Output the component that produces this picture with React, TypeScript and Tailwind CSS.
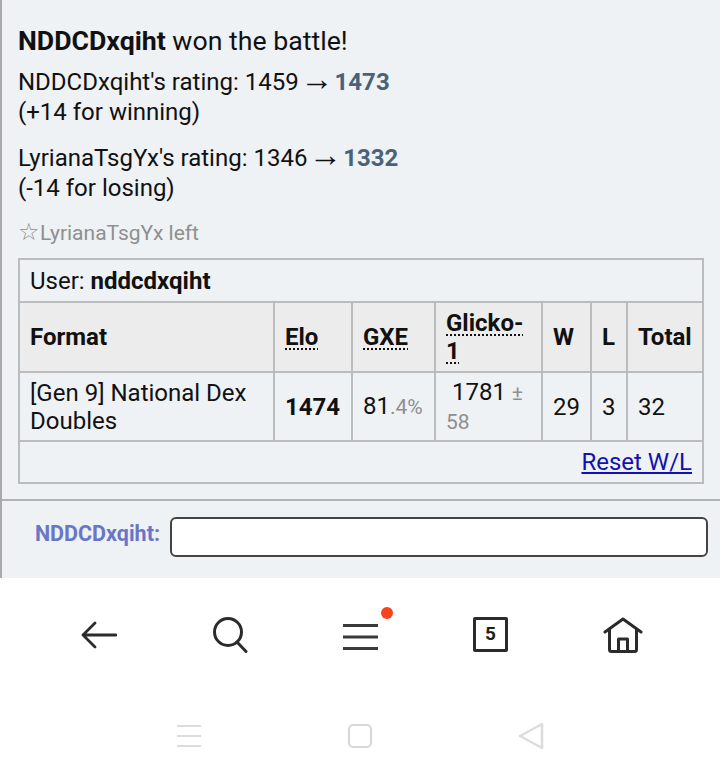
const Abbr = ({ children }: { children: React.ReactNode }) => (
  <span className="underline decoration-dotted decoration-[1.5px] underline-offset-[3px]">{children}</span>
);

const Arrow = () => (
  <span className="font-['Liberation_Sans',sans-serif] text-[33px] leading-[0] mx-[-4.500px]">→</span>
);

const cell = "border-2 border-[#bbbcbd] px-[10px] py-0";

const NavIcons = () => (
  <div className="flex-1 flex flex-col">
    <div className="h-[113px] flex justify-between pl-[80px] pr-[77px] items-center">
      <svg width="37" height="28" viewBox="0 0 37 28" fill="none" stroke="#2b2b2b" strokeWidth="2.800">
        <path d="M36 14H3M15 2 3 14 15 26" strokeLinecap="round" strokeLinejoin="round" />
      </svg>
      <svg width="36" height="37" viewBox="0 0 36 37" fill="none" stroke="#2b2b2b" strokeWidth="3">
        <circle cx="16" cy="16" r="13.500" />
        <path d="M25 26 34 35.500" strokeLinecap="round" />
      </svg>
      <div className="relative mt-[4px]">
        <svg width="35" height="26" viewBox="0 0 35 26" fill="none" stroke="#3a3a3a" strokeWidth="3">
          <path d="M0 1.500H35M0 13H35M0 24.500H35" />
        </svg>
        <span className="absolute right-[-15px] top-[-17px] size-3 rounded-full bg-[#f5451f]" />
      </div>
      <div className="size-[35px] border-[3px] border-[#2b2b2b] rounded-[2px] flex items-center justify-center font-['Roboto',sans-serif] font-bold text-[19px] text-[#1e1e1e]">
        5
      </div>
      <svg width="40" height="36" viewBox="0 0 40 36" fill="none" stroke="#2b2b2b" strokeWidth="3" strokeLinejoin="round" strokeLinecap="round">
        <path d="M2 15 20 2l18 13M6.500 12v20.500q0 2 2 2h23q2 0 2-2V12" />
        <path d="M15.500 34V22h9v12" />
      </svg>
    </div>
    <div className="flex-1 flex justify-between px-[176px] pt-[3px] items-center">
      <svg width="26" height="24" viewBox="0 0 26 24" fill="none" stroke="#dcdcdc" strokeWidth="2">
        <path d="M1 2H25M1 12H25M1 22H25" />
      </svg>
      <span className="size-[24px] border-2 border-[#d8d8d8] rounded-[5px]" />
      <svg width="26" height="28" viewBox="0 0 26 28" fill="none" stroke="#dcdcdc" strokeWidth="2.500" strokeLinejoin="round">
        <path d="M24 2v24L2 14Z" />
      </svg>
    </div>
  </div>
);

export default function App() {
  return (
    <div className="w-[720px] h-[778px] bg-white overflow-hidden font-['Roboto',sans-serif] text-[#111] flex flex-col">
      <div className="h-[578px] bg-[#eef2f5] border-l-2 border-[#a9a9a9] flex flex-col">
        <div className="h-[499px] pl-[16px] pr-[14px] pt-[26px] text-[24px] leading-[30px]">
          <p className="text-[26.700px]"><b className="font-bold">NDDCDxqiht</b> won the battle!</p>
          <p className="mt-[11px]">
            NDDCDxqiht's rating: 1459 <Arrow /> <b className="font-bold text-[#4a6278]">1473</b>
            <br />(+14 for winning)
          </p>
          <p className="mt-[16px]">
            LyrianaTsgYx's rating: 1346 <Arrow /> <b className="font-bold text-[#4a6278]">1332</b>
            <br />(-14 for losing)
          </p>
          <p className="mt-[14px] text-[#8f8f8f] text-[21px]">
            <span className="text-[24px]">☆</span>LyrianaTsgYx left
          </p>
          <table className="mt-[10px] w-[686px] table-fixed border-collapse border-2 border-[#bbbcbd] leading-[28px]">
            <colgroup>
              <col className="w-[255px]" />
              <col className="w-[78px]" />
              <col className="w-[83px]" />
              <col className="w-[107px]" />
              <col className="w-[49px]" />
              <col className="w-[36px]" />
              <col />
            </colgroup>
            <tbody>
              <tr className="h-[43px]">
                <td colSpan={7} className={cell}>User: <b className="font-bold">nddcdxqiht</b></td>
              </tr>
              <tr className="h-[70px] bg-[#ececec] font-bold">
                <td className={cell}>Format</td>
                <td className={cell}><Abbr>Elo</Abbr></td>
                <td className={cell}><Abbr>GXE</Abbr></td>
                <td className={cell}><Abbr>Glicko-1</Abbr></td>
                <td className={cell}>W</td>
                <td className={cell}>L</td>
                <td className={cell}>Total</td>
              </tr>
              <tr className="h-[69px]">
                <td className={cell}>[Gen 9] National Dex Doubles</td>
                <td className={cell}><b className="font-bold">1474</b></td>
                <td className={cell}>81<small className="text-[21px] text-[#8f8f8f]">.4%</small></td>
                <td className={cell}>
                  &nbsp;1781 <small className="text-[21px] text-[#8f8f8f]">± 58</small>
                </td>
                <td className={cell}>29</td>
                <td className={cell}>3</td>
                <td className={cell}>32</td>
              </tr>
              <tr className="h-[42px]">
                <td colSpan={7} className={`${cell} text-right`}>
                  <a href="#" className="text-[#1212b0] underline underline-offset-2">Reset W/L</a>
                </td>
              </tr>
            </tbody>
          </table>
        </div>
        <div className="flex-1 border-t-2 border-[#b0b2b4] flex items-start pt-[16px] pr-[12px]">
          <span className="w-[168px] h-[40px] text-right pr-[10px] leading-[34px] text-[21.500px] font-bold text-[#6b75c6]">NDDCDxqiht:</span>
          <input className="flex-1 h-[40px] bg-white border-2 border-[#444] rounded-[6px]" />
        </div>
      </div>
      <NavIcons />
    </div>
  );
}
